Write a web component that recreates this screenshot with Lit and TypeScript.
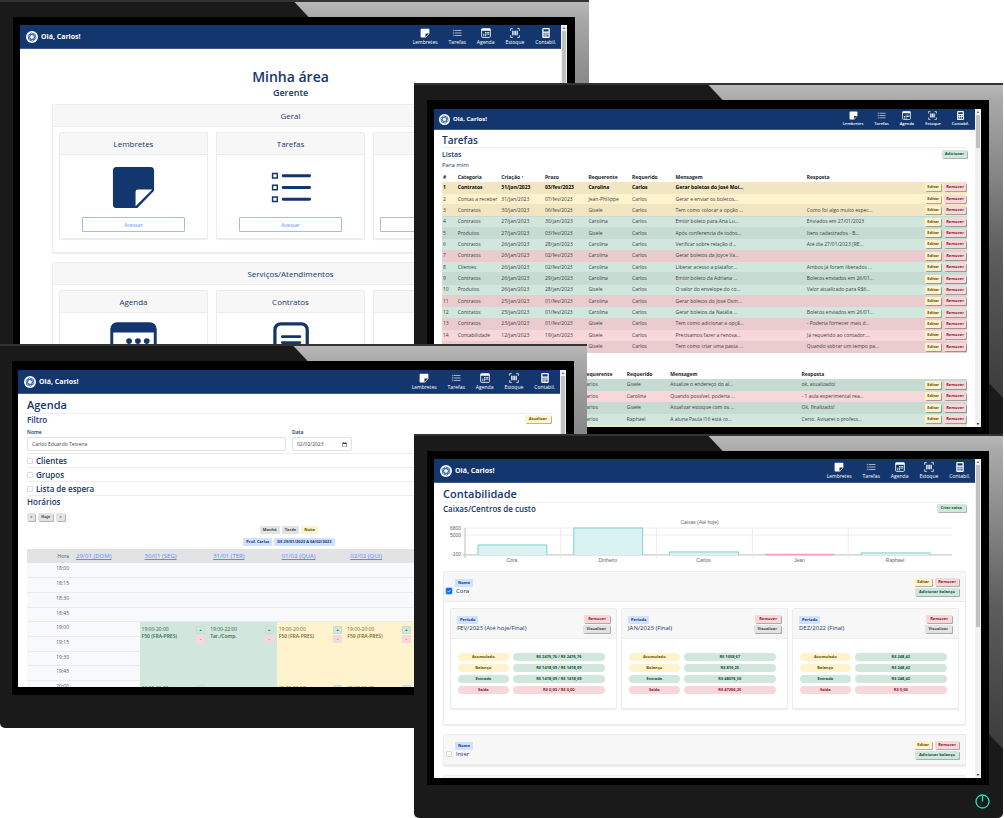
import { LitElement, html, svg, css, nothing } from "lit";
import { customElement, property } from "lit/decorators.js";
import { classMap } from "lit/directives/class-map.js";

const base = css`
  :host { box-sizing: border-box; display: block; color: #14366f; font-family: "Open Sans", "Noto Sans", sans-serif; font-size: 5px; line-height: 8px; }
  * { box-sizing: border-box; }
  h1, h2, h3, p { margin: 0; font-weight: 500; }
  .page { padding: 0 9px; }
  .title { font-size: 11px; font-weight: 600; line-height: 16px; padding: 3px 0 0; height: 20px; border-bottom: 1px solid #ededf0; }
  .sub { font-size: 8px; line-height: 12px; font-weight: 600; }
  .bar { display: flex; justify-content: space-between; align-items: flex-start; }
  button {
    font: 700 4px/6px "Open Sans", "Noto Sans", sans-serif; border: 0; border-radius: 1px; margin: 0;
    padding: 1px 4px; white-space: nowrap; display: block; box-shadow: 1px 1px 0 rgba(0, 0, 0, 0.3);
  }
  .green { background: #d1e7dd; color: #0f5132; }
  .yellow { background: #fff3cd; color: #664d03; }
  .red { background: #f8d7da; color: #842029; }
  .grey { background: #e2e3e5; color: #41464b; }
  .blue { background: #cfe2ff; color: #14366f; }
  .badge { font-size: 4px; line-height: 6px; font-weight: 700; padding: 1px 3px; border-radius: 1px; white-space: nowrap; }
  .card { border: 1px solid #ececec; border-radius: 2px; box-shadow: 0 1px 1px rgba(0, 0, 0, 0.08); background: #fff; }
  .head { background: #f7f7f7; border-bottom: 1px solid #ececec; }
`;

const paths = {
  note: svg`<path fill="currentColor" fill-rule="evenodd" d="M2.200 1h11.600A1.200 1.200 0 0 1 15 2.200v6.900L9.300 15H2.200A1.200 1.200 0 0 1 1 13.800V2.200A1.200 1.200 0 0 1 2.200 1zM8.700 14.400L14.400 8.700H9.500a.8.8 0 0 0-.8.8z"/>`,
  list: svg`<g fill="none" stroke="currentColor"><path stroke-width="1" stroke-linecap="round" d="M5.500 4h9M5.500 8h9M5.500 12h9"/><path stroke-width=".5" d="M1.900 3.200h1.600v1.600H1.900zM1.900 7.200h1.600v1.600H1.900zM1.900 11.200h1.600v1.600H1.900z"/></g>`,
  agenda: svg`<rect x="1" y="1" width="14" height="14" rx="1.500" fill="none" stroke="currentColor" stroke-width="1.300"/><path fill="currentColor" d="M1 1h14v3.200H1zM6.500 6.500h1.700v1.700H6.500zM9 6.500h1.700v1.700H9zM11.500 6.500h1.700v1.700h-1.700zM3.500 9h1.700v1.700H3.500zM6.500 9h1.700v1.700H6.500zM9 9h1.700v1.700H9zM11.500 9h1.700v1.700h-1.700zM3.500 11.500h1.700v1.700H3.500zM6.500 11.500h1.700v1.700H6.500z"/>`,
  stock: svg`<path fill="none" stroke="currentColor" stroke-width="1.200" d="M1 4.500V1h3.500M11.500 1H15v3.500M15 11.500V15h-3.500M4.500 15H1v-3.500"/><path fill="currentColor" d="M3.500 4.500h1.500v7H3.500zM5.700 4.500h1v7h-1zM7.300 4.500h2v7h-2zM10 4.500h.8v7H10zM11.400 4.500h1.200v7h-1.200z"/>`,
  calc: svg`<path fill="currentColor" fill-rule="evenodd" d="M3.500 0h9A1.500 1.500 0 0 1 14 1.500v13a1.500 1.500 0 0 1-1.500 1.500h-9A1.500 1.500 0 0 1 2 14.500v-13A1.500 1.500 0 0 1 3.500 0zM4 2v3.500h8V2zM4 7.500v1.700h2V7.500zM7 7.500v1.700h2V7.500zM10 7.500v1.700h2V7.500zM4 10.500v1.700h2v-1.700zM7 10.500v1.700h2v-1.700zM10 10.500V14h2v-3.500zM4 13v1h2v-1zM7 13v1h2v-1z"/>`,
  calendar: svg`<rect x=".6" y=".6" width="14.800" height="14.800" rx="1.800" fill="none" stroke="currentColor" stroke-width="1"/><path fill="currentColor" d="M1 2.200Q1 .6 2.600.6h10.800Q15 .6 15 2.200v1.400H1z"/><g fill="currentColor"><circle cx="6.500" cy="6.500" r="1"/><circle cx="9.500" cy="6.500" r="1"/><circle cx="12.500" cy="6.500" r="1"/><circle cx="3.500" cy="9.500" r="1"/><circle cx="6.500" cy="9.500" r="1"/></g>`,
  paper: svg`<rect x="2.700" y=".6" width="11" height="14.800" rx="2" fill="none" stroke="currentColor" stroke-width="1.100"/><path fill="none" stroke="currentColor" stroke-width=".9" stroke-linecap="round" d="M5.200 5h6M5.200 7h6M5.200 9h6"/>`,
};
const icon = (name: keyof typeof paths) => html`<svg class="icon" viewBox="0 0 16 16" aria-hidden="true">${paths[name]}</svg>`;

@customElement("top-nav")
class TopNav extends LitElement {
  @property({ type: Boolean, reflect: true }) compact = false;
  static styles = [base, css`
    :host { background: #14366f; border-bottom: 1px solid #3d5b8e; color: #fff; height: 24px; }
    :host([compact]) { height: 21px; }
    nav { height: 100%; display: flex; align-items: center; justify-content: space-between; padding: 0 5px 0 6px; }
    .brand { display: flex; align-items: center; gap: 3px; font-size: 7px; font-weight: 700; color: inherit; text-decoration: none; }
    .logo { width: 12px; height: 12px; display: block; }
    .links { display: flex; gap: 11px; }
    .link { display: flex; flex-direction: column; align-items: center; gap: 1px; font-size: 5px; line-height: 7px; font-weight: 500; color: #fff; text-decoration: none; }
    .icon { width: 10px; height: 10px; display: block; }
    :host([compact]) nav { padding: 0 6px 0 5px; }
    :host([compact]) .brand { font-size: 6px; }
    :host([compact]) .logo { width: 11px; height: 11px; }
    :host([compact]) .link { gap: 0; font-size: 4px; font-weight: 600; }
    :host([compact]) .icon { width: 9px; height: 9px; }
  `];
  render() {
    const links: [keyof typeof paths, string][] = [["note", "Lembretes"], ["list", "Tarefas"], ["agenda", "Agenda"], ["stock", "Estoque"], ["calc", "Contabil."]];
    return html`<nav>
      <a class="brand" href="#"><svg class="logo" viewBox="0 0 24 24" aria-hidden="true">
        <circle cx="12" cy="12" r="12" fill="#fff"/>
        <g fill="none" stroke="#2456a3" stroke-width="1.500"><ellipse cx="12" cy="12" rx="8.500" ry="4.500" transform="rotate(20 12 12)"/><ellipse cx="12" cy="12" rx="8.500" ry="4.500" transform="rotate(80 12 12)"/><ellipse cx="12" cy="12" rx="8.500" ry="4.500" transform="rotate(140 12 12)"/></g>
      </svg>Olá, Carlos!</a>
      <div class="links">${links.map(([i, t]) => html`<a class="link" href="#">${icon(i)}${t}</a>`)}</div>
    </nav>`;
  }
}

@customElement("desk-monitor")
class DeskMonitor extends LitElement {
  @property({ type: Boolean, reflect: true }) compact = false;
  @property({ type: Boolean }) power = false;
  @property({ type: Number }) thumb = 160;
  static styles = [base, css`
    :host { position: relative; height: 384px; background: #1a1a1a; border-top: 2px solid #333; border-radius: 0 0 5px 5px; padding: 15px 14px 33px 13px; }
    :host([slim]) { padding: 15px 13px 33px 12px; }
    :host([slim]) .bezel { padding: 9px 8px 8px 6px; }
    :host([compact]) .bezel { padding-top: 9px; }
    .metal {
      position: absolute; inset: 0; background: linear-gradient(#b9b9b9, #a9a9a9 15px, #858585 90px, #5c5c5c 170px, #3c3c3c 310px);
      clip-path: polygon(50% 0, 100% 0, 100% 313px, calc(100% - 15px) 297px, calc(100% - 15px) 16px, calc(50% + 15px) 16px);
    }
    .bezel { position: relative; height: 100%; background: #000; padding: 8px 8px 7px 7px; }
    .screen { height: 100%; background: #fff; display: grid; grid-template: minmax(0, 1fr) / minmax(0, 1fr) 6px; overflow: hidden; }
    .content { overflow: hidden; height: 100%; min-height: 0; }
    .scroll { background: #f1f1f1; display: flex; flex-direction: column; overflow: hidden; }
    .arrow { width: 6px; height: 6px; display: block; flex: none; }
    .thumb { background: #c1c1c1; margin: 0 1px auto; flex: none; }
    .power { position: absolute; right: 13px; bottom: 9px; width: 15px; height: 15px; padding: 0; background: none; box-shadow: none; }
    .power svg { display: block; width: 15px; height: 15px; }
  `];
  render() {
    return html`<div class="metal"></div>
      <div class="bezel"><div class="screen">
        <div class="content"><top-nav ?compact=${this.compact}></top-nav><slot></slot></div>
        <div class="scroll">
          <svg class="arrow" viewBox="0 0 6 6"><path d="M1.500 4L3 2l1.500 2z" fill="#777"/></svg>
          <div class="thumb" style="height:${this.thumb}px"></div>
          <svg class="arrow" viewBox="0 0 6 6"><path d="M1.500 2L3 4l1.500-2z" fill="#444"/></svg>
        </div>
      </div></div>
      ${this.power ? html`<button class="power" aria-label="Power"><svg viewBox="0 0 15 15"><circle cx="7.500" cy="7.500" r="6.500" fill="none" stroke="#1fe0bd" stroke-width="1.300"/><path d="M7.500 1.500v6" stroke="#1fe0bd" stroke-width="1.300"/></svg></button>` : nothing}`;
  }
}

@customElement("area-screen")
class AreaScreen extends LitElement {
  static styles = [base, css`
    .page { padding: 18px 32px 0; text-align: center; }
    .name { font-size: 14px; font-weight: 600; line-height: 20px; }
    .role { font-size: 9px; line-height: 11px; font-weight: 600; margin-bottom: 6px; }
    .group { margin-bottom: 9px; padding-bottom: 13px; }
    .label { font-size: 8px; font-weight: 400; line-height: 21px; }
    .tiles { display: grid; grid-template-columns: repeat(3, minmax(0, 1fr)); gap: 8px; padding: 5px 6px 0; }
    .tile { height: 107px; display: flex; flex-direction: column; }
    .body { flex: 1; display: flex; flex-direction: column; align-items: center; justify-content: space-between; padding: 9px 22px 6px; }
    .icon { width: 47px; height: 47px; display: block; }
    .go { width: 100%; height: 15px; font-size: 5px; font-weight: 400; background: #fff; border: 1px solid #9dbcf8; color: #5f8af5; box-shadow: none; }
    .wide { padding: 9px 6px 6px; }
    .off { border-color: #bbb; color: #777; }
  `];
  tile(name: string, i: keyof typeof paths, off = false) {
    return html`<div class="card tile"><h3 class="head label">${name || html`&nbsp;`}</h3><div class=${classMap({ body: true, wide: off })}>${icon(i)}<button class=${classMap({ go: true, off })} aria-label="Acessar">${off ? nothing : "Acessar"}</button></div></div>`;
  }
  render() {
    return html`<main class="page">
      <h1 class="name">Minha área</h1><h2 class="role">Gerente</h2>
      <section class="card group"><h2 class="head label">Geral</h2><div class="tiles">${this.tile("Lembretes", "note")}${this.tile("Tarefas", "list")}${this.tile("", "stock", true)}</div></section>
      <section class="card group"><h2 class="head label">Serviços/Atendimentos</h2><div class="tiles">${this.tile("Agenda", "calendar")}${this.tile("Contratos", "paper")}${this.tile("", "calc", true)}</div></section>
    </main>`;
  }
}

type Row = [string, string, string, string, string, string, string, string];
const tasks: Row[] = [
  ["yellow", "Contratos", "31/jan/2023", "03/fev/2023", "Carolina", "Carlos", "Gerar boletos do José Moi...", ""],
  ["yellow", "Contas a receber", "31/jan/2023", "07/fev/2023", "Jean-Philippe", "Carlos", "Gerar e enviar os boletos...", ""],
  ["yellow", "Contratos", "30/jan/2023", "06/fev/2023", "Gisele", "Carlos", "Tem como colocar a opção ...", "Como foi algo muito espec..."],
  ["green", "Contratos", "27/jan/2023", "30/jan/2023", "Carolina", "Carlos", "Emitir boleto para Ana Lu...", "Enviados em 27/01/2023"],
  ["green", "Produtos", "27/jan/2023", "03/fev/2023", "Gisele", "Carlos", "Após conferencia de todos...", "Itens cadastrados - B..."],
  ["green", "Contratos", "26/jan/2023", "28/jan/2023", "Carolina", "Carlos", "Verificar sobre relação d...", "Até dia 27/01/2023 [RE..."],
  ["red", "Contratos", "26/jan/2023", "02/fev/2023", "Carolina", "Carlos", "Gerar boletos da Joyce Va...", ""],
  ["green", "Clientes", "26/jan/2023", "02/fev/2023", "Carolina", "Carlos", "Liberar acesso a platafor...", "Ambos já foram liberados ..."],
  ["green", "Contratos", "26/jan/2023", "29/jan/2023", "Carolina", "Carlos", "Emitir boleto da Adriana ...", "Boletos enviados em 26/01..."],
  ["green", "Produtos", "26/jan/2023", "28/jan/2023", "Gisele", "Carlos", "O valor do envelope do co...", "Valor atualizado para R$6..."],
  ["red", "Contratos", "25/jan/2023", "01/fev/2023", "Carolina", "Carlos", "Gerar boletos do José Osm...", ""],
  ["green", "Contratos", "25/jan/2023", "01/fev/2023", "Carolina", "Carlos", "Gerar boletos da Natália ...", "Boletos enviados em 26/01..."],
  ["red", "Contratos", "23/jan/2023", "01/fev/2023", "Gisele", "Carlos", "Tem como adicionar a opçã...", "- Poderia fornecer mais d..."],
  ["red", "Contabilidade", "12/jan/2023", "19/jan/2023", "Gisele", "Carlos", "Precisamos fazer a renova...", "Já requerido ao contador...."],
  ["red", "", "", "", "Gisele", "Carlos", "Tem como criar uma pasta ...", "Quando sobrar um tempo pa..."],
];
const sent: Row[] = [
  ["green", "", "", "", "Carlos", "Gisele", "Atualize o endereço do al...", "ok, atualizado!"],
  ["red", "", "", "", "Carlos", "Carolina", "Quando possível, poderia ...", "- 1 aula experimental rea..."],
  ["green", "", "", "", "Carlos", "Gisele", "Atualizar estoque com os ...", "Ok, finalizado!"],
  ["green", "", "", "", "Carlos", "Raphael", "A aluna Paula I16 está co...", "Certo. Avisarei o profess..."],
  ["yellow", "", "", "", "", "", "", ""],
];

@customElement("tasks-screen")
class TasksScreen extends LitElement {
  static styles = [base, css`
    .page { padding: 0 8px; }
    .title { font-size: 10px; line-height: 14px; height: 18px; }
    .bar { padding-top: 1px; }
    .bar button { margin-top: 1px; padding: 1px 3px; }
    .sub { font-size: 7px; line-height: 11px; font-weight: 600; }
    .small { font-size: 6px; line-height: 11px; }
    table { width: 100%; table-layout: fixed; border-collapse: collapse; color: #212529; font-size: 5px; line-height: 7px; }
    .inbox { height: 181px; margin-top: 1px; }
    .outbox { height: 68px; margin-top: 16px; }
    .n { width: 3%; } .outbox .n { width: 2%; }
    .c { width: 8.3%; } .m { width: 25%; } .a { width: 43px; }
    th, td { padding: 0; height: 10px; text-align: left; white-space: nowrap; }
    th:first-child, td:first-child { padding-left: 1px; }
    tbody td { border-bottom: 1px solid rgba(0, 0, 0, 0.05); color: #3c4043; }
    tbody tr:nth-child(odd) td { box-shadow: inset 0 0 0 20px rgba(0, 0, 0, 0.05); }
    .first td { font-weight: 700; color: #000; }
    .acts { display: flex; gap: 3px; justify-content: flex-end; padding-right: 1px; }
    .acts button { padding: 1px 2px; }
  `];
  table(rows: Row[], kind: string) {
    const inbox = kind === "inbox";
    return html`<table class=${kind}>
      <colgroup><col class="n"><col class="c"><col class="c"><col class="c"><col class="c"><col class="c"><col class="m"><col><col class="a"></colgroup>
      <thead><tr>${["#", "Categoria", "Criação ↑", "Prazo", "Requerente", "Requerido", "Mensagem", "Resposta", ""].map((t, i) => html`<th>${inbox || i > 3 ? t : nothing}</th>`)}</tr></thead>
      <tbody>${rows.map(([tone, ...cells], i) => html`<tr class=${classMap({ [tone]: true, first: inbox && i === 0 })}>
        <td>${inbox && i < 14 ? i + 1 : nothing}</td>${cells.map((c) => html`<td>${c}</td>`)}
        <td><div class="acts"><button class="yellow">Editar</button><button class="red">Remover</button></div></td></tr>`)}</tbody>
    </table>`;
  }
  render() {
    return html`<main class="page"><h1 class="title">Tarefas</h1>
      <div class="bar"><h2 class="sub">Listas</h2><button class="green">Adicionar</button></div>
      <h3 class="small">Para mim</h3>
      ${this.table(tasks, "inbox")}${this.table(sent, "outbox")}</main>`;
  }
}

@customElement("agenda-screen")
class AgendaScreen extends LitElement {
  static styles = [base, css`
    .bar { height: 14px; }
    .bar button { margin-top: 1px; }
    .fields { display: grid; grid-template-columns: minmax(0, 259fr) minmax(0, 60fr) minmax(0, 193fr); gap: 6px; padding-bottom: 2px; border-bottom: 1px solid #ededf0; }
    .field label { display: block; line-height: 9px; font-weight: 600; }
    .field input { display: block; width: 100%; height: 14px; border: 1px solid #dfe1e5; border-radius: 2px; padding: 0 4px; font: 400 5px/10px "Open Sans", "Noto Sans", sans-serif; color: #444; background: #fff; }
    ::-webkit-datetime-edit { line-height: 12px; padding: 0; }
    ::-webkit-datetime-edit-month-field, ::-webkit-datetime-edit-day-field, ::-webkit-datetime-edit-year-field { padding: 0; font-size: 6px; }
    ::-webkit-calendar-picker-indicator { padding: 0; }
    .check { display: flex; align-items: center; gap: 3px; height: 14px; border-bottom: 1px solid #ededf0; }
    .check label { font-size: 8px; font-weight: 600; line-height: 12px; }
    .check input { appearance: none; width: 6px; height: 6px; margin: 0; border: 1px solid #dcdcdc; border-radius: 1px; }
    .steps { display: flex; gap: 3px; padding: 5px 0; }
    .steps button { padding: 1px 3px; }
    .badges { display: flex; justify-content: center; gap: 2px; }
    .range { padding: 4px 0 3px; }
    table { width: 100%; height: 191px; table-layout: fixed; border-collapse: collapse; color: #555; }
    .hour { width: 44px; }
    th, td { height: 14px; }
    th { background: #e2e3e5; font-size: 6px; font-weight: 400; text-align: left; padding: 0 0 0 5px; }
    th a { color: #5f8af5; }
    th:first-child, .time { text-align: right; padding: 0 2px 0 0; font-size: 5px; line-height: 7px; }
    td { background: #f8f9fb; border-bottom: 1px solid #e8eaec; padding: 0; vertical-align: top; }
    .time { padding-top: 2px; }
    td.green, td.yellow { border-bottom: 0; padding: 4px 3px 0 2px; }
    td.green { background: #d1e7dd; color: #33664e; } td.yellow { background: #fff3cd; color: #7a642a; }
    .event { display: flex; justify-content: space-between; }
    .event p { line-height: 7px; font-weight: 400; white-space: nowrap; } .event .who { font-weight: 600; }
    .pm { display: flex; flex-direction: column; gap: 1px; }
    .pm button { width: 9px; box-shadow: none; padding: 1px; }
    .pm .green { border: 1px solid #c5ddd1; padding: 0; }
  `];
  event(tone: string, time: string, who: string, span: number) {
    return html`<td class=${tone} rowspan=${span}><div class="event"><div><p>${time}</p><p class="who">${who}</p></div><div class="pm"><button class="green">+</button><button class="red">-</button></div></div></td>`;
  }
  render() {
    const days = ["29/01 (DOM)", "30/01 (SEG)", "31/01 (TER)", "01/02 (QUA)", "02/02 (QUI)", "", ""];
    const times = ["18:00", "18:15", "18:30", "18:45", "19:00", "19:15", "19:30", "19:45", "20:00", "20:15", "20:30", "20:45"];
    const cells = (i: number) => {
      if (i < 4) return days.map(() => html`<td></td>`);
      if (i === 4) return html`<td></td>${this.event("green", "19:00-20:00", "F50 (FRA-PRES)", 4)}${this.event("green", "19:00-22:00", "Tar./Comp.", 8)}${this.event("yellow", "19:00-20:00", "F50 (FRA-PRES)", 4)}${this.event("yellow", "19:00-20:00", "F59 (FRA-PRES)", 4)}<td></td><td></td>`;
      if (i === 8) return html`<td></td>${this.event("green", "20:00-21:00", "", 4)}${this.event("yellow", "20:00-21:00", "", 4)}${this.event("yellow", "20:00-21:00", "", 4)}<td></td><td></td>`;
      return html`<td></td><td></td><td></td>`;
    };
    return html`<main class="page"><h1 class="title">Agenda</h1>
      <div class="bar"><h2 class="sub">Filtro</h2><button class="yellow">Atualizar</button></div>
      <div class="fields">
        <div class="field"><label for="nome">Nome</label><input id="nome" value="Carlos Eduardo Teixeira"></div>
        <div class="field"><label for="data">Data</label><input id="data" type="date" value="2023-02-02"></div>
      </div>
      ${["Clientes", "Grupos", "Lista de espera"].map((t, i) => html`<div class="check"><input type="checkbox" id="c${i}"><label for="c${i}">${t}</label></div>`)}
      <h2 class="sub">Horários</h2>
      <div class="steps"><button class="grey">&lt;</button><button class="grey">Hoje</button><button class="grey">&gt;</button></div>
      <div class="badges"><span class="badge grey">Manhã</span><span class="badge grey">Tarde</span><span class="badge yellow">Noite</span></div>
      <div class="badges range"><span class="badge blue">Prof. Carlos</span><span class="badge blue">DE 29/01/2023 A 04/02/2023</span></div>
      <table><colgroup><col class="hour"></colgroup>
        <thead><tr><th>Hora</th>${days.map((d) => html`<th><a href="#">${d}</a></th>`)}</tr></thead>
        <tbody>${times.map((t, i) => html`<tr><td class="time">${t}</td>${cells(i)}</tr>`)}</tbody>
      </table></main>`;
  }
}

@customElement("accounts-screen")
class AccountsScreen extends LitElement {
  static styles = [base, css`
    .bar { height: 14px; }
    .bar > button { margin-top: 1px; }
    .chart { display: block; width: 100%; margin-bottom: 4px; }
    .chart text { font: 5px "Liberation Sans", sans-serif; fill: #666; }
    .box { margin-bottom: 9px; }
    .head { display: flex; justify-content: space-between; height: 30px; padding: 6px 6px 0 2px; }
    .name { display: grid; grid-template-columns: 6px auto; column-gap: 3px; align-content: start; padding-top: 1px; }
    .name .badge { grid-column: 2; justify-self: start; }
    .name label { font-size: 6px; line-height: 9px; font-weight: 500; padding-left: 1px; }
    .name input { appearance: none; margin: 1px 0 0; width: 6px; height: 6px; border: 1px solid #d8d8d8; border-radius: 1px; background: #fff; }
    .name input:checked { background: #0d6efd url('data:image/svg+xml,<svg xmlns="http://www.w3.org/2000/svg" viewBox="0 0 8 8"><path d="M2 4l1.500 1.500L6 2.500" fill="none" stroke="white"/></svg>'); border-color: #0d6efd; box-shadow: 0 0 0 1px #b6d4fe; background-origin: border-box; }
    .acts { display: flex; flex-direction: column; align-items: flex-end; gap: 2px; }
    .pair { display: flex; gap: 3px; }
    .pair button { padding: 1px 3px; }
    .months { display: grid; grid-template-columns: repeat(3, minmax(0, 1fr)); gap: 4px; padding: 6px 6px 15px; }
    .month { height: 101px; }
    .month .head { padding: 6px; }
    .month .name { grid-template-columns: auto; }
    .month .name .badge { grid-column: 1; }
    .month .name p { font-size: 6px; line-height: 9px; }
    .pills { display: grid; grid-template-columns: 51fr 93fr; gap: 3px 4px; padding: 14px 11px 0 7px; }
    .pill { border-radius: 4px; font-size: 4px; line-height: 8px; height: 8px; font-weight: 700; text-align: center; }
  `];
  month(name: string, vals: string[]) {
    const labels = [["Acumulado", "yellow", "green"], ["Balanço", "yellow", "green"], ["Entrada", "green", "green"], ["Saída", "red", "red"]];
    return html`<section class="card month"><div class="head"><div class="name"><span class="badge blue">Período</span><p>${name}</p></div>
      <div class="acts"><button class="red">Remover</button><button class="grey">Visualizar</button></div></div>
      <div class="pills">${labels.map(([l, a, b], i) => html`<span class="pill ${a}">${l}</span><span class="pill ${b}">${vals[i]}</span>`)}</div></section>`;
  }
  head(name: string, on: boolean) {
    return html`<div class="head"><div class="name"><span class="badge blue">Nome</span><input type="checkbox" id=${name} ?checked=${on}><label for=${name}>${name}</label></div>
      <div class="acts"><div class="pair"><button class="yellow">Editar</button><button class="red">Remover</button></div><button class="green">Adicionar balanço</button></div></div>`;
  }
  chart() {
    const bars: [string, number][] = [["Cora", 28], ["Dinheiro", 11], ["Carlos", 35], ["Jean", 38], ["Raphael", 36]];
    const x = (i: number) => 22 + i * 96;
    return html`<svg class="chart" viewBox="0 0 524 50" role="img" aria-label="Caixas (Até hoje)">
      <text x="257" y="7" text-anchor="middle">Caixas (Até hoje)</text>
      <text x="18" y="13" text-anchor="end">6800</text><text x="18" y="20" text-anchor="end">5000</text><text x="18" y="39" text-anchor="end">-100</text>
      <path d="M20 11H510M20 18H510" stroke="#e6e6e6" stroke-width=".8"/><path d="M20 38H510M22 11V41" stroke="#bdbdbd" stroke-width="1"/>
      ${bars.map(([n, y], i) => svg`<path d="M${x(i + 1)} 11V41" stroke=${i < 4 ? "#e6e6e6" : "none"} stroke-width=".8"/>
        ${n === "Jean" ? svg`<path d="M${x(i) + 13} 37.500h69" stroke="#ff9bb3" stroke-width="1.500"/>`
          : svg`<path d="M${x(i) + 13} 38V${y}h69V38" fill="#dbf2f2" stroke="#7fd0cf" stroke-width="1"/>`}
        <text x=${x(i) + 47} y="45" text-anchor="middle">${n}</text>`)}
    </svg>`;
  }
  render() {
    return html`<main class="page"><h1 class="title">Contabilidade</h1>
      <div class="bar"><h2 class="sub">Caixas/Centros de custo</h2><button class="green">Criar caixa</button></div>
      ${this.chart()}
      <section class="card box">${this.head("Cora", true)}<div class="months">
        ${this.month("FEV/2023 (Até hoje/Final)", ["R$ 2476,76 / R$ 2476,76", "R$ 1418,09 / R$ 1418,09", "R$ 1418,09 / R$ 1418,09", "R$ 0,00 / R$ 0,00"])}
        ${this.month("JAN/2023 (Final)", ["R$ 1058,67", "R$ 810,25", "R$ 48076,50", "R$ 47266,25"])}
        ${this.month("DEZ/2022 (Final)", ["R$ 248,42", "R$ 248,42", "R$ 248,42", "R$ 0,00"])}
      </div></section>
      <section class="card box">${this.head("Inter", false)}</section>
      <section class="card box"><div class="head"></div></section>
    </main>`;
  }
}

@customElement("app-root")
class AppRoot extends LitElement {
  static styles = css`
    :host { display: block; background: #fff; }
    .desk { display: grid; grid-template-columns: 414fr 173fr 2fr 414fr 1fr; grid-template-rows: 83px 261px 90px 384px; align-items: start; overflow: hidden; }
    .area { grid-column: 1 / 4; grid-row: 1 / 4; }
    .tasks { grid-column: 2 / 5; grid-row: 2 / 5; }
    .agenda { grid-column: 1 / 3; grid-row: 3 / 5; }
    .accounts { grid-column: 2 / 5; grid-row: 4 / 5; }
  `;
  render() {
    return html`<div class="desk">
      <desk-monitor class="area" .thumb=${300}><area-screen></area-screen></desk-monitor>
      <desk-monitor class="tasks" compact .thumb=${33}><tasks-screen></tasks-screen></desk-monitor>
      <desk-monitor class="agenda" slim .thumb=${200}><agenda-screen></agenda-screen></desk-monitor>
      <desk-monitor class="accounts" power .thumb=${162}><accounts-screen></accounts-screen></desk-monitor>
    </div>`;
  }
}
